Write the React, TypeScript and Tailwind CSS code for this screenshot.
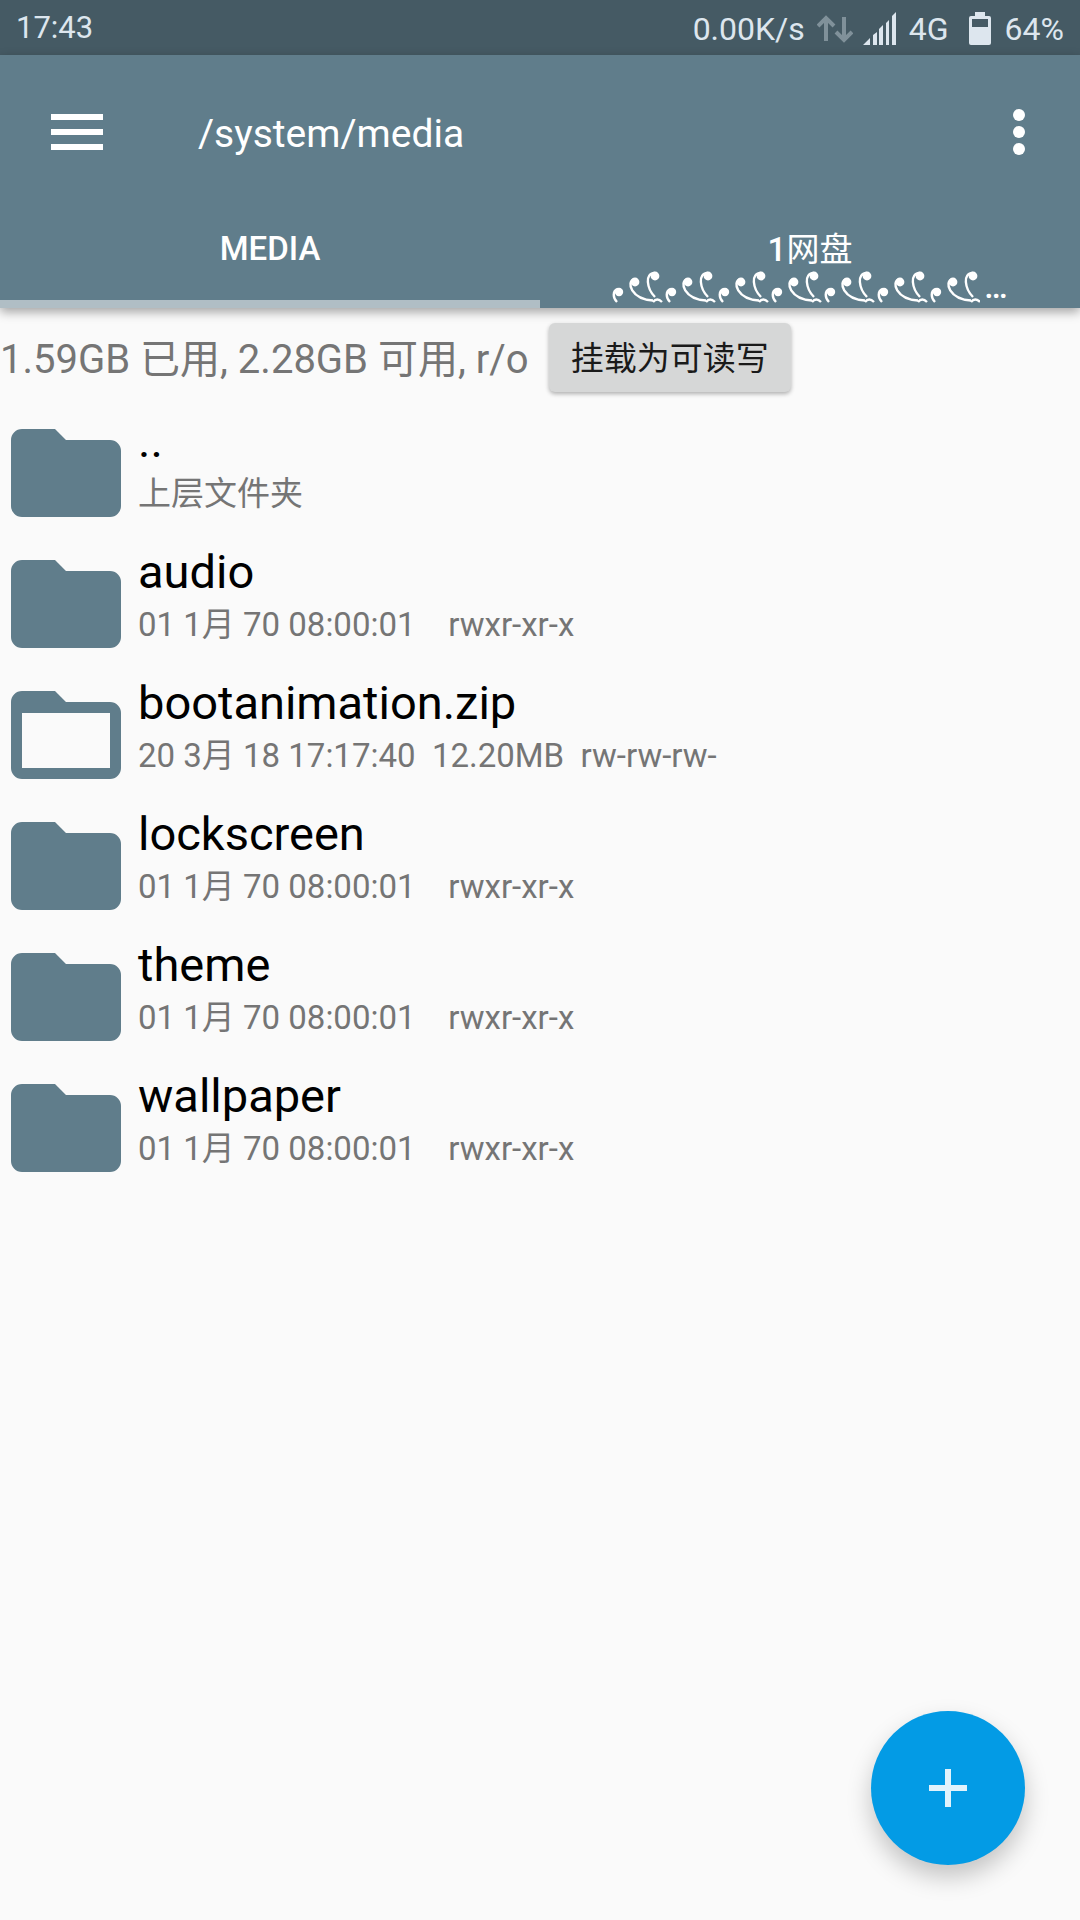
import React from "react";

const files = [
  { name: "..", info: "上层文件夹", open: false },
  { name: "audio", info: "01 1月 70 08:00:01    rwxr-xr-x", open: false },
  { name: "bootanimation.zip", info: "20 3月 18 17:17:40  12.20MB  rw-rw-rw-", open: true },
  { name: "lockscreen", info: "01 1月 70 08:00:01    rwxr-xr-x", open: false },
  { name: "theme", info: "01 1月 70 08:00:01    rwxr-xr-x", open: false },
  { name: "wallpaper", info: "01 1月 70 08:00:01    rwxr-xr-x", open: false },
];

function Folder({ open }: { open: boolean }) {
  return (
    <svg width="110" height="88" viewBox="0 0 110 88" className="shrink-0" aria-hidden="true">
      <path
        fill="#607d8b"
        fillRule="evenodd"
        d={
          "M11 0H44L55 11H99A11 11 0 0 1 110 22V77A11 11 0 0 1 99 88H11A11 11 0 0 1 0 77V11A11 11 0 0 1 11 0Z" +
          (open ? "M11 22V77H99V22Z" : "")
        }
      />
    </svg>
  );
}

const curls = [0, 53, 106, 159, 212, 265, 318];

function Curls() {
  return (
    <svg width="368" height="32" viewBox="0 0 368 32" aria-hidden="true" className="shrink-0">
      {curls.map((x) => (
        <g key={x} transform={`translate(${x} 0)`} fill="none" stroke="#fff" strokeWidth="2.4">
          <circle cx="7" cy="21" r="4.2" fill="#fff" stroke="none" />
          <path d="M6 18C0 20 1 27 5 31" />
          <circle cx="23" cy="11" r="4.4" fill="#fff" stroke="none" />
          <path d="M22 8C14 11 19 28 41 29.5" />
          <circle cx="43" cy="5" r="4.4" fill="#fff" stroke="none" />
          <path d="M43 2C32 2 35 18 43 26" />
          <path d="M41 31Q45 26 50 31" />
        </g>
      ))}
    </svg>
  );
}

export default function App() {
  return (
    <div className="relative flex min-h-screen flex-col bg-[#fafafa] font-[Roboto,'Noto_Sans_CJK_SC',sans-serif]">
      <div className="flex h-[55px] items-center justify-between bg-[#455a64] px-4 pt-[2px] text-[32px] text-[#dde6ee]">
        <span className="text-[31px]">17:43</span>
        <div className="flex items-center">
          <span>0.00K/s</span>
          <svg width="36" height="28" viewBox="0 0 36 28" fill="none" stroke="#80919a" strokeWidth="4" className="ml-3" aria-hidden="true">
            <path d="M9 26V3M1 11L9 3L17 11M27 2V25M19 17L27 25L35 17" />
          </svg>
          <svg width="34" height="33" viewBox="0 0 34 33" fill="#dde6ee" className="ml-[10px]" aria-hidden="true">
            <path d="M0 33L7 26V33ZM10 33V23L14 20V33ZM16 33V17L20 13V33ZM23 33V11L26 8V33ZM29 33V4L33 0V33Z" />
          </svg>
          <span className="ml-3">4G</span>
          <svg width="22" height="33" viewBox="0 0 22 33" fill="#dde6ee" fillRule="evenodd" className="ml-5" aria-hidden="true">
            <path d="M6 0H16V4H20Q22 4 22 6V31Q22 33 20 33H2Q0 33 0 31V6Q0 4 2 4H6ZM3 7V15H19V7Z" />
          </svg>
          <span className="ml-[14px]">64%</span>
        </div>
      </div>

      <header className="bg-[#607d8b] text-white shadow-[0_4px_10px_rgba(0,0,0,0.35)]">
        <div className="flex h-[154px] items-center justify-between px-12">
          <div className="flex items-center gap-[92px]">
            <button aria-label="Menu" className="flex flex-col gap-[9px] px-[3px]">
              <span className="h-[6px] w-[52px] bg-white" />
              <span className="h-[6px] w-[52px] bg-white" />
              <span className="h-[6px] w-[52px] bg-white" />
            </button>
            <h1 className="pt-1 text-[39px] leading-[48px]">/system/media</h1>
          </div>
          <button aria-label="More options" className="flex flex-col gap-[5px] px-[7px]">
            <span className="size-3 rounded-full bg-white" />
            <span className="size-3 rounded-full bg-white" />
            <span className="size-3 rounded-full bg-white" />
          </button>
        </div>
        <nav className="grid h-[99px] grid-cols-2 text-[33px] font-medium leading-[42px]">
          <button className="border-b-8 border-[#b0bec5] pb-3">MEDIA</button>
          <button className="flex flex-col items-center justify-end pb-[5px]">
            <span>
              1<span className="font-normal">网盘</span>
            </span>
            <span className="flex h-8 items-end gap-1">
              <Curls />
              <span className="leading-8">…</span>
            </span>
          </button>
        </nav>
      </header>

      <div className="flex items-center gap-5 pt-[15px]">
        <p className="pt-1 text-[40px] leading-[48px] text-[#757575]">1.59GB 已用, 2.28GB 可用, r/o</p>
        <button className="h-[69px] rounded-md bg-[#d6d7d7] px-[22px] pt-[3px] text-[33px] text-[#1a1a1a] shadow-[0_2px_4px_rgba(0,0,0,0.3)]">
          挂载为可读写
        </button>
      </div>

      <ul className="pt-6">
        {files.map((f) => (
          <li key={f.name} className="flex h-[131px] items-start gap-[17px] px-[11px]">
            <div className="pt-[13px]">
              <Folder open={f.open} />
            </div>
            <div>
              <div className="text-[47px] leading-[50px] text-black">{f.name}</div>
              <div className="whitespace-pre text-[33px] leading-[56px] text-[#757575]">{f.info}</div>
            </div>
          </li>
        ))}
      </ul>

      <button
        aria-label="Add"
        className="fixed bottom-[55px] right-[55px] flex size-[154px] items-center justify-center rounded-full bg-[#039be5] shadow-[0_12px_24px_rgba(0,0,0,0.22)]"
      >
        <svg width="38" height="38" viewBox="0 0 38 38" stroke="#e1f3fc" strokeWidth="6" aria-hidden="true">
          <path d="M19 0V38M0 19H38" />
        </svg>
      </button>
    </div>
  );
}
